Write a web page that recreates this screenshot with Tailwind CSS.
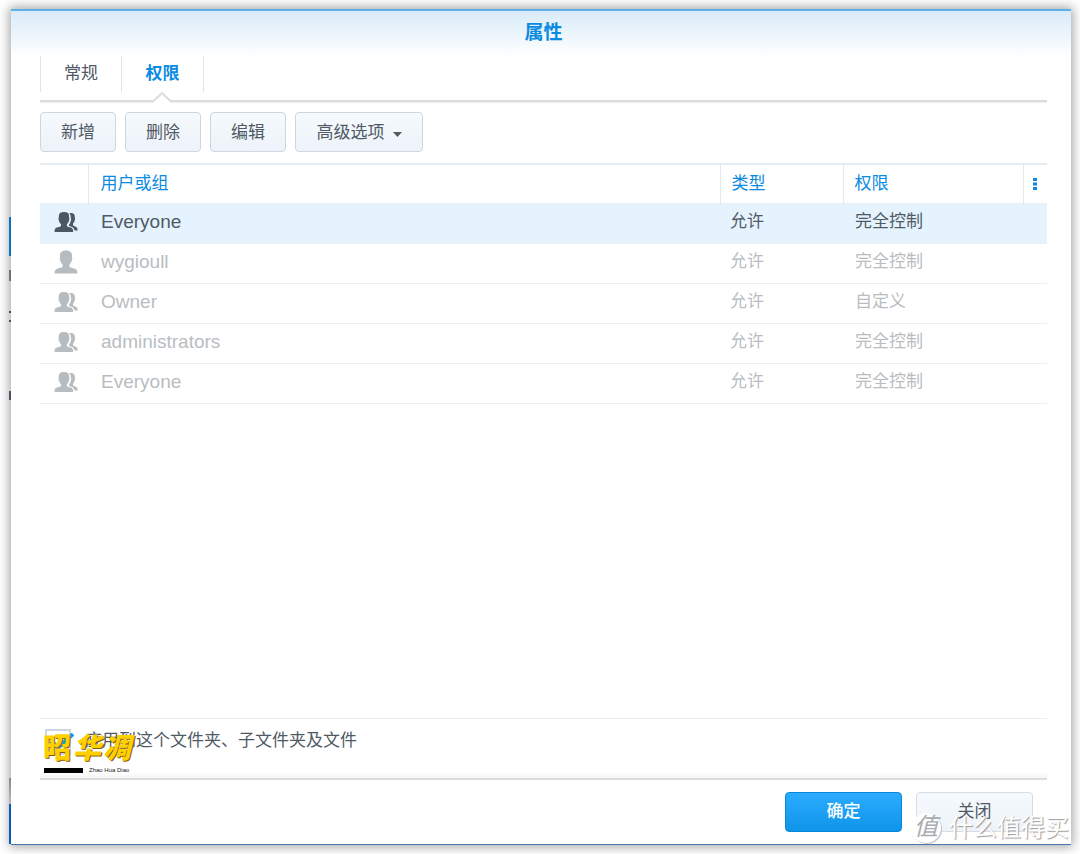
<!DOCTYPE html>
<html lang="zh-CN">
<head>
<meta charset="utf-8">
<meta name="viewport" content="width=device-width, initial-scale=1">
<title>属性</title>
<script src="https://cdn.jsdelivr.net/npm/@tailwindcss/browser@4"></script>
</head>
<body class="relative flex min-h-screen flex-col bg-white pt-[9px] pr-[9px] pb-[9px] pl-[11px] font-['Liberation_Sans','Noto_Sans_CJK_SC',sans-serif] text-[17px] leading-6 text-[#505a64]">

<svg width="0" height="0" class="absolute" aria-hidden="true">
  <symbol id="user" viewBox="0 0 24 24">
    <path d="M12 .500c-3.800 0-6 1.800-6 5v2.200c-.6.200-.5 1.600.1 2.600.5 1.900 1.400 3.300 2.400 4.200v2.300c-.9 1-3.200 1.300-5.200 1.900C1.500 19.300.5 20.800.5 23.500h23c0-2.700-1-4.200-2.800-4.800-2-.6-4.300-.9-5.200-1.900v-2.300c1-.9 1.900-2.300 2.400-4.200.6-1 .7-2.400.1-2.600V5.500c0-3.200-2.200-5-6-5z"/>
  </symbol>
  <symbol id="group" viewBox="0 0 24 24">
    <path d="M10 2C6.500 2 4.800 3.400 4.800 6.200v2c-.5.200-.4 1.500.1 2.300.4 1.700 1.200 2.800 2.100 3.600v1.800c-.8.800-2.600 1-4.200 1.600C1.200 18.100.5 19.500.5 22h18.700c0-2.500-.7-3.900-2.300-4.500-1.600-.6-3.200-.8-4-1.600v-1.800c.9-.8 1.700-1.900 2.100-3.600.5-.8.6-2.100.1-2.300v-2C15.100 3.400 13.500 2 10 2z"/>
    <path d="M15.200 3.300c.6-.3 1.200-.4 1.900-.4 2.500 0 3.700 1.200 3.700 3.600v1.800c.5.200.4 1.300-.1 2-.3 1.500-.9 2.500-1.700 3.200v1.800c.6.700 1.500.9 2.600 1.400 1.500.6 2 1.700 2 3.900h-3c-.4-2-1.300-3.300-3.100-3.900-1.100-.3-2-.6-2.600-1v-.9c.9-1 1.400-2.100 1.700-3.600.7-1.100.8-2.600.1-3.200V6.500c0-1.300-.5-2.400-1.500-3.200z"/>
  </symbol>
</svg>

<!-- slivers of the desktop behind the dialog -->
<div class="absolute top-[217px] left-[9px] h-[39px] w-[3px] bg-[#0a90f0]"></div>
<div class="absolute top-[270px] left-[9px] h-[11px] w-[3px] bg-[#909090]"></div>
<div class="absolute top-[311px] left-[9px] h-[2px] w-[3px] bg-[#606060]"></div>
<div class="absolute top-[320px] left-[9px] h-[2px] w-[3px] bg-[#606060]"></div>
<div class="absolute top-[391px] left-[9px] h-[9px] w-[3px] bg-[#606b78]"></div>
<div class="absolute top-[778px] left-[9px] h-[26px] w-[3px] bg-linear-to-b from-[#aaaaaa] to-[#eeeeee]"></div>
<div class="absolute top-[804px] left-[9px] h-[40px] w-[3px] bg-[#1070e8]"></div>

<main role="dialog" aria-labelledby="title" class="relative flex flex-1 flex-col border-t-2 border-b border-t-[#5fb0e6] border-b-[#4a73a8] bg-white bg-linear-to-b from-[#d9ebf8] to-white to-[46px] px-[29px] pr-6 pb-3 shadow-[0_0_10px_2px_rgba(0,0,0,0.35)]">
  <h1 id="title" class="mb-[11px] pt-[10px] text-center text-[19px] font-bold text-[#0a8be2]">属性</h1>

  <div role="tablist" class="relative flex h-[46px] items-start border-b-2 border-[#dcdcdc] shadow-[0_1px_1px_#f0f0f0]">
    <button role="tab" class="h-[36px] w-[81px] border-l border-[#dce6ee]">常规</button>
    <button role="tab" aria-selected="true" class="relative h-[36px] w-[83px] border-x border-[#dce6ee] font-bold text-[#0a8be2]">权限</button>
    <svg class="absolute top-[35px] left-[111px]" width="22" height="13" viewBox="0 0 22 13" fill="#fff" aria-hidden="true"><path d="M3 9h16v4H3z"/><path d="M1 10h1.500L11 2l8.500 8H21" stroke="#dcdcdc" stroke-width="2"/></svg>
  </div>

  <div class="mt-[10px] flex gap-[9px]">
    <button class="h-10 w-[76px] rounded-[4px] border border-[#cdd7e1] bg-linear-to-b from-[#f6fafe] to-[#edf3f9] pt-px">新增</button>
    <button class="h-10 w-[76px] rounded-[4px] border border-[#cdd7e1] bg-linear-to-b from-[#f6fafe] to-[#edf3f9] pt-px">删除</button>
    <button class="h-10 w-[76px] rounded-[4px] border border-[#cdd7e1] bg-linear-to-b from-[#f6fafe] to-[#edf3f9] pt-px">编辑</button>
    <button class="flex h-10 w-[128px] items-center justify-center gap-2 rounded-[4px] border border-[#cdd7e1] bg-linear-to-b from-[#f6fafe] to-[#edf3f9] pt-px">高级选项
      <svg class="mt-1" width="9" height="5" viewBox="0 0 9 5" fill="currentColor" aria-hidden="true"><path d="M0 0h9L4.500 5z"/></svg>
    </button>
  </div>

  <table class="mt-[11px] w-full table-fixed border-collapse text-left">
    <colgroup><col class="w-12"><col><col class="w-[123px]"><col class="w-[180px]"><col class="w-6"></colgroup>
    <thead>
      <tr class="h-[39px] border-t-2 border-b border-t-[#e4edf4] border-b-[#e8eff5] text-[#0a8be2]">
        <th></th>
        <th class="border-l border-[#dfeaf3] pl-3 font-normal">用户或组</th>
        <th class="border-l border-[#dfeaf3] pl-[11px] font-normal">类型</th>
        <th class="border-l border-[#dfeaf3] pl-[11px] font-normal">权限</th>
        <th class="border-l border-[#dfeaf3]"><button aria-label="列" class="flex w-full justify-center"><svg width="4" height="12" viewBox="0 0 4 12" fill="currentColor"><path d="M0 0h4v3H0zM0 4.500h4v3H0zM0 9h4v3H0z"/></svg></button></th>
      </tr>
    </thead>
    <tbody>
      <tr class="h-10 border-b border-[#e8eff5] bg-[#e5f3fe]">
        <td class="pb-[2px] pl-[14px]"><svg class="size-6 fill-[#4b5863]"><use href="#group"/></svg></td>
        <td class="pb-[2px] pl-[13px] text-[19px]">Everyone</td><td class="pb-[2px] pl-[10px]">允许</td><td class="pb-[2px] pl-3" colspan="2">完全控制</td>
      </tr>
      <tr class="h-10 border-b border-[#e8edf2] text-[#b9bdc1]">
        <td class="pb-[2px] pl-[14px]"><svg class="size-6 fill-[#b7bcc1]"><use href="#user"/></svg></td>
        <td class="pb-[2px] pl-[13px] text-[19px]">wygioull</td><td class="pb-[2px] pl-[10px]">允许</td><td class="pb-[2px] pl-3" colspan="2">完全控制</td>
      </tr>
      <tr class="h-10 border-b border-[#e8edf2] text-[#b9bdc1]">
        <td class="pb-[2px] pl-[14px]"><svg class="size-6 fill-[#b7bcc1]"><use href="#group"/></svg></td>
        <td class="pb-[2px] pl-[13px] text-[19px]">Owner</td><td class="pb-[2px] pl-[10px]">允许</td><td class="pb-[2px] pl-3" colspan="2">自定义</td>
      </tr>
      <tr class="h-10 border-b border-[#e8edf2] text-[#b9bdc1]">
        <td class="pb-[2px] pl-[14px]"><svg class="size-6 fill-[#b7bcc1]"><use href="#group"/></svg></td>
        <td class="pb-[2px] pl-[13px] text-[19px]">administrators</td><td class="pb-[2px] pl-[10px]">允许</td><td class="pb-[2px] pl-3" colspan="2">完全控制</td>
      </tr>
      <tr class="h-10 border-b border-[#e8edf2] text-[#b9bdc1]">
        <td class="pb-[2px] pl-[14px]"><svg class="size-6 fill-[#b7bcc1]"><use href="#group"/></svg></td>
        <td class="pb-[2px] pl-[13px] text-[19px]">Everyone</td><td class="pb-[2px] pl-[10px]">允许</td><td class="pb-[2px] pl-3" colspan="2">完全控制</td>
      </tr>
    </tbody>
  </table>

  <div class="relative mt-auto h-[62px] border-t border-b-2 border-t-[#e8edf4] border-b-[#dcdcdc] bg-linear-to-t from-[#f5f5f5] to-white to-[6px] pt-[10px] pl-[5px]">
    <label class="flex items-start gap-[14px]">
      <span class="relative size-[26px]">
        <input type="checkbox" checked class="block size-[26px] appearance-none border-2 border-[#ccd7df] bg-white">
        <svg class="absolute top-1 left-1" width="26" height="20" viewBox="0 0 26 20" fill="none" stroke="#0a9bf2" stroke-width="4" aria-hidden="true"><path d="M2 8l7 7L24 1"/></svg>
      </span>
      <span>应用到这个文件夹、子文件夹及文件</span>
    </label>
    <div class="absolute top-[14px] left-[3px] flex gap-[2px] text-[28px] leading-[32px] font-black text-[#ffd000] [text-shadow:1px_1px_0_#8a5a00]"><span>昭</span><span class="italic">华</span><span class="italic">凋</span></div>
    <div class="absolute top-[48px] left-1 flex items-center gap-[6px] text-[6px] leading-[6px] text-[#222222]"><span class="h-[5px] w-[39px] bg-black"></span>Zhao Hua Diao</div>
  </div>

  <div class="mt-3 flex justify-end gap-[14px] pr-[14px]">
    <button class="h-10 w-[117px] rounded-[4px] border border-[#0a86d8] bg-linear-to-b from-[#2aabff] to-[#0c95e8] font-medium text-white">确定</button>
    <button class="h-10 w-[117px] rounded-[4px] border border-[#d5dde5] bg-linear-to-b from-[#f6fafe] to-[#edf3f9]">关闭</button>
  </div>

  <div class="absolute right-[2px] bottom-0 flex items-center gap-2 whitespace-nowrap">
    <span class="size-[30px] rounded-full bg-white/85 text-center text-[24px] leading-[28px] text-[#a8acb0] italic shadow-[1px_1px_1px_#bbbbbb]">值</span>
    <span class="text-[24px] leading-[32px] text-white [text-shadow:1px_1px_1px_#999999]">什么值得买</span>
  </div>
</main>
</body>
</html>
